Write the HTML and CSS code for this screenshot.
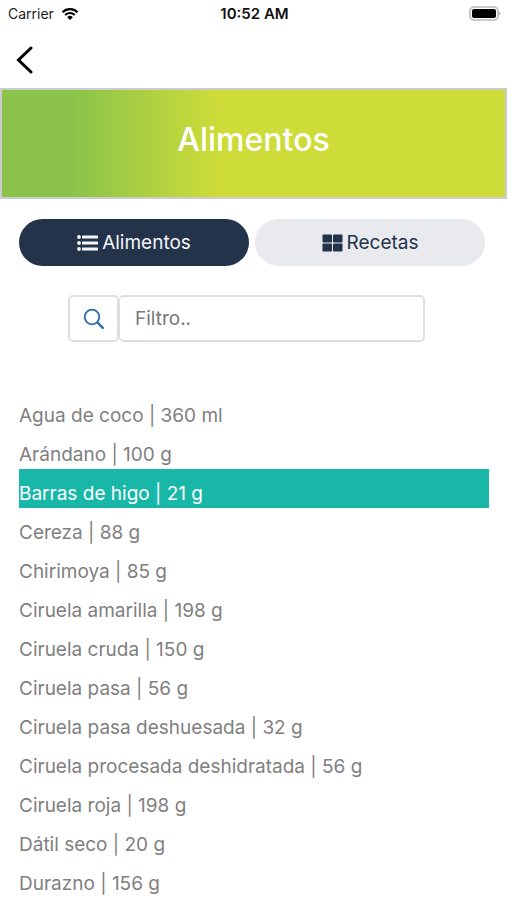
FILE: index.html
```html
<!DOCTYPE html>
<html lang="es">
<head>
  <meta charset="UTF-8" />
  <meta name="viewport" content="width=device-width, initial-scale=1.0"/>
  <title>Alimentos</title>
  <link rel="stylesheet" href="styles.css">
</head>
<body>
  <div class="status-bar">
    <div class="carrier">
      <span>Carrier</span>
      <svg width="18" height="14" viewBox="0 0 18 14" aria-hidden="true">
        <path d="M1.5 5.2a10.6 10.6 0 0 1 15 0M4.2 8a6.8 6.8 0 0 1 9.6 0" fill="none" stroke="#000" stroke-width="2.2"/>
        <path d="M9 13 6.2 10.2a4 4 0 0 1 5.6 0z"/>
      </svg>
    </div>
    <div class="clock">10:52 AM</div>
    <div class="battery">
      <svg width="32" height="15" viewBox="0 0 32 15" aria-hidden="true">
        <rect x="1" y="1" width="28" height="13" rx="4" fill="#fff" stroke="#bbb" stroke-width="1.6"/>
        <rect x="3" y="3" width="24" height="9" rx="2"/>
        <path d="M30.2 5.5q2 2 0 4z" fill="#999"/>
      </svg>
    </div>
  </div>

  <nav class="nav-bar">
    <button class="back-btn" aria-label="Volver">
      <svg width="18" height="28" viewBox="0 0 18 28" aria-hidden="true">
        <path d="M15 2 2.5 14 15 26" fill="none" stroke="#000" stroke-width="3" stroke-linecap="round" stroke-linejoin="miter"/>
      </svg>
    </button>
  </nav>

  <header class="banner">
    <h1>Alimentos</h1>
  </header>

  <main>
    <div class="tabs">
      <button class="tab-btn active">
        <svg width="21" height="18" viewBox="0 0 21 18" fill="currentColor" aria-hidden="true">
          <circle cx="2" cy="3" r="1.9"/>
          <circle cx="2" cy="9" r="1.9"/>
          <circle cx="2" cy="15" r="1.9"/>
          <rect x="5" y="1.5" width="16" height="3" rx="0.6"/>
          <rect x="5" y="7.5" width="16" height="3" rx="0.6"/>
          <rect x="5" y="13.5" width="16" height="3" rx="0.6"/>
        </svg>
        <span>Alimentos</span>
      </button>
      <button class="tab-btn">
        <svg width="21" height="18" viewBox="0 0 21 18" fill="currentColor" aria-hidden="true">
          <rect x="0.5" y="0.5" width="9.5" height="8" rx="0.8"/>
          <rect x="11" y="0.5" width="9.5" height="8" rx="0.8"/>
          <rect x="0.5" y="9.5" width="9.5" height="8" rx="0.8"/>
          <rect x="11" y="9.5" width="9.5" height="8" rx="0.8"/>
        </svg>
        <span>Recetas</span>
      </button>
    </div>

    <form class="search">
      <button class="search-btn" type="submit" aria-label="Buscar">
        <svg width="22" height="22" viewBox="0 0 22 22" fill="none" stroke="#2f69ac" aria-hidden="true">
          <circle cx="9" cy="9" r="7.3" stroke-width="1.8"/>
          <path d="m14.5 14.5 5.3 5.3" stroke-width="2.4" stroke-linecap="round"/>
        </svg>
      </button>
      <input class="search-input" type="text" placeholder="Filtro.." aria-label="Filtro">
    </form>

    <ul class="food-list">
      <li>Agua de coco | 360 ml</li>
      <li>Arándano | 100 g</li>
      <li class="selected">Barras de higo | 21 g</li>
      <li>Cereza | 88 g</li>
      <li>Chirimoya | 85 g</li>
      <li>Ciruela amarilla | 198 g</li>
      <li>Ciruela cruda | 150 g</li>
      <li>Ciruela pasa | 56 g</li>
      <li>Ciruela pasa deshuesada | 32 g</li>
      <li>Ciruela procesada deshidratada | 56 g</li>
      <li>Ciruela roja | 198 g</li>
      <li>Dátil seco | 20 g</li>
      <li>Durazno | 156 g</li>
    </ul>
  </main>
</body>
</html>
```
FILE: styles.css
```css
:root {
  --navy: #22334a;
  --tab-bg: #e9eaee;
  --teal: #18b7a8;
  --text-color: #808080;
  --border: #dcdfe2;
}

* {
  box-sizing: border-box;
}

body {
  margin: 0;
  font-family: Inter, "Liberation Sans", sans-serif;
  font-size: 19px;
  color: var(--text-color);
  background: #fff;
}

button {
  font: inherit;
  border: none;
  cursor: pointer;
}

.status-bar {
  display: grid;
  grid-template-columns: 1fr auto 1fr;
  align-items: center;
  height: 27px;
  padding: 0 6px 0 8px;
  font-size: 14px;
  color: #222;
}

.carrier {
  display: flex;
  align-items: center;
  gap: 7px;
}

.clock {
  font-size: 15px;
  font-weight: 600;
  color: #111;
}

.battery {
  display: flex;
  justify-content: flex-end;
}

.nav-bar {
  display: flex;
  align-items: center;
  height: 61px;
  padding: 4px 16px 0;
}

.back-btn {
  display: flex;
  padding: 0;
  background: none;
}

.banner {
  padding: 28px 0 36px;
  border: 2px solid #ccc;
  background: linear-gradient(to right, #8bc34a 14%, #cddc39 43%);
  text-align: center;
}

.banner h1 {
  margin: 0;
  font-size: 32px;
  font-weight: 500;
  line-height: 43px;
  color: #fff;
}

main {
  padding: 20px 18px 0 19px;
}

.tabs {
  display: flex;
  gap: 6px;
  padding-right: 4px;
}

.tab-btn {
  display: flex;
  flex: 1;
  align-items: center;
  justify-content: center;
  gap: 4px;
  height: 47px;
  border-radius: 24px;
  background: var(--tab-bg);
  color: var(--navy);
}

.tab-btn.active {
  background: var(--navy);
  color: #f4f6f9;
}

.search {
  display: flex;
  width: 76%;
  height: 47px;
  margin: 29px 0 49px 49px;
}

.search-btn {
  display: flex;
  align-items: center;
  justify-content: center;
  width: 51px;
  border: 2px solid var(--border);
  border-radius: 5px;
  background: #fff;
}

.search-input {
  flex: 1;
  min-width: 0;
  padding: 0 15px;
  border: 2px solid var(--border);
  border-left-width: 1px;
  border-radius: 5px;
  font: inherit;
  color: #555;
}

.search-input::placeholder {
  color: #777;
}

.food-list {
  margin: 0;
  padding: 0;
  list-style: none;
}

.food-list li {
  padding-top: 10px;
  line-height: 29px;
}

.food-list .selected {
  background: var(--teal);
  color: #fff;
}
```
